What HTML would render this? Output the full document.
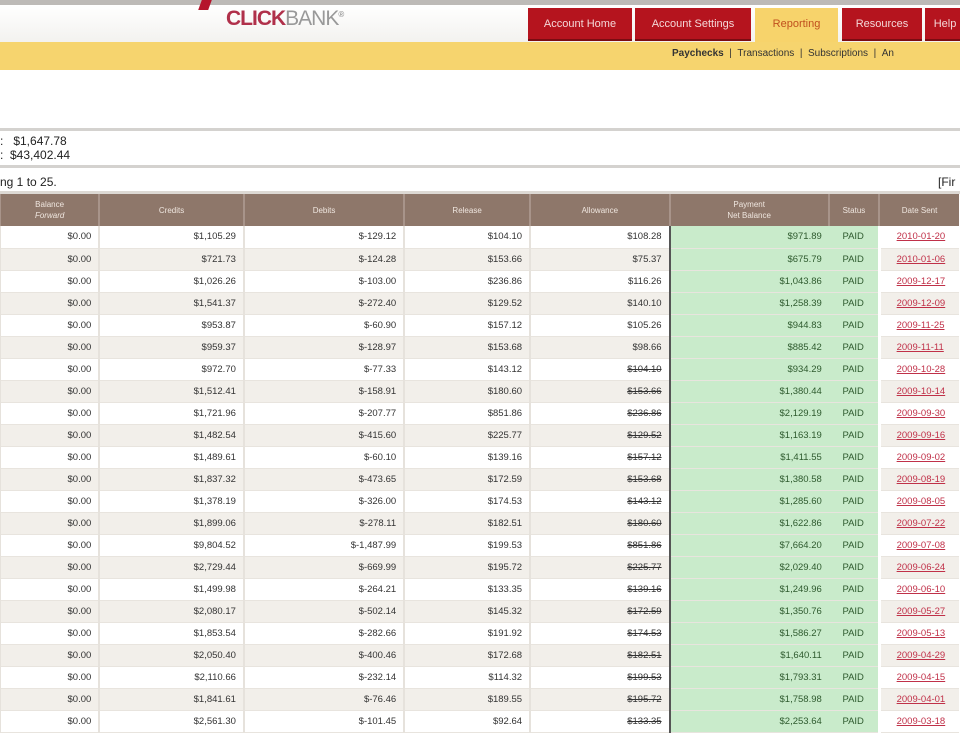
<!DOCTYPE html>
<html><head><meta charset="utf-8"><style>
*{margin:0;padding:0;box-sizing:border-box}
body{width:960px;height:720px;overflow:hidden;background:#fff;font-family:"Liberation Sans",sans-serif;position:relative}
.a{position:absolute}
table{position:absolute;left:-1px;top:194px;border-collapse:collapse;table-layout:fixed;font-size:9.5px;color:#333}
td{height:22px;text-align:right;padding-right:7px;border-left:2px solid #e6e2dc;white-space:nowrap;border-bottom:1px solid #e8e4de}
tr.e td{background:#f2efea}
th{background:#8e776a;color:#efe6df;font-weight:normal;font-size:8px;height:32px;border-left:2px solid #a8948a;line-height:11px}
td.g{background:#c9ebcb!important;color:#2e5a2e}
td.s{text-align:center;padding:0;border-left:none;border-right:2px solid #444}
td.pg{border-left:2px solid #555}
td.d{text-align:left;padding-left:16px;color:#c03048;text-decoration:underline;border-left:3px solid #fff}
.tab{position:absolute;top:8px;height:33px;background:#b5141e;color:#f4d8d8;font-size:11px;line-height:33px;text-align:center;border-bottom:2px solid #7a0c12}
</style></head><body>
<div class="a" style="left:0;top:0;width:960px;height:5px;background:#bdbab7"></div>
<div class="a" style="left:0;top:5px;width:960px;height:37px;background:linear-gradient(#fff,#f3f2ef)"></div>
<div class="a" style="left:200px;top:0;width:10px;height:10px;background:#b5142c;transform:skewX(-20deg)"></div>
<div class="a" style="left:226px;top:7px;font-size:21px;font-weight:bold;color:#b0304a;letter-spacing:-1px">CLICK<span style="font-weight:normal;color:#999">BANK</span><sup style="font-size:8px;color:#999">®</sup></div>
<div class="tab" style="left:528px;width:104px">Account Home</div>
<div class="tab" style="left:635px;width:116px">Account Settings</div>
<div class="tab" style="left:755px;width:83px;background:#f7d36b;color:#c0501e;border-bottom:none;height:34px">Reporting</div>
<div class="tab" style="left:842px;width:80px">Resources</div>
<div class="tab" style="left:925px;width:40px">Help</div>
<div class="a" style="left:0;top:42px;width:960px;height:28px;background:#f6d46e"></div>
<div class="a" style="left:672px;top:48px;font-size:10px;color:#333;white-space:nowrap"><b>Paychecks</b> &nbsp;| &nbsp;Transactions &nbsp;| &nbsp;Subscriptions &nbsp;| &nbsp;An</div>
<div class="a" style="left:0;top:128px;width:960px;height:3px;background:#d4d2cf"></div>
<div class="a" style="left:0;top:134px;font-size:12px;color:#222;line-height:14px">:&nbsp;&nbsp; $1,647.78<br>:&nbsp; $43,402.44</div>
<div class="a" style="left:0;top:165px;width:960px;height:3px;background:#d4d2cf"></div>
<div class="a" style="left:0;top:175px;font-size:12px;color:#222">ng 1 to 25.</div>
<div class="a" style="left:938px;top:175px;font-size:12px;color:#222">[Fir</div>
<div class="a" style="left:0;top:191px;width:960px;height:3px;background:#ddd9d4"></div>
<table>
<colgroup><col style="width:101px"><col style="width:147px"><col style="width:163px"><col style="width:128px"><col style="width:142px"><col style="width:162px"><col style="width:51px"><col style="width:80px"></colgroup>
<tr><th>Balance<br><i>Forward</i></th><th>Credits</th><th>Debits</th><th>Release</th><th>Allowance</th><th>Payment<br>Net Balance</th><th>Status</th><th>Date Sent</th></tr>
<tr><td>$0.00</td><td>$1,105.29</td><td>$-129.12</td><td>$104.10</td><td>$108.28</td><td class="g pg">$971.89</td><td class="g s">PAID</td><td class="d">2010-01-20</td></tr>
<tr class="e"><td>$0.00</td><td>$721.73</td><td>$-124.28</td><td>$153.66</td><td>$75.37</td><td class="g pg">$675.79</td><td class="g s">PAID</td><td class="d">2010-01-06</td></tr>
<tr><td>$0.00</td><td>$1,026.26</td><td>$-103.00</td><td>$236.86</td><td>$116.26</td><td class="g pg">$1,043.86</td><td class="g s">PAID</td><td class="d">2009-12-17</td></tr>
<tr class="e"><td>$0.00</td><td>$1,541.37</td><td>$-272.40</td><td>$129.52</td><td>$140.10</td><td class="g pg">$1,258.39</td><td class="g s">PAID</td><td class="d">2009-12-09</td></tr>
<tr><td>$0.00</td><td>$953.87</td><td>$-60.90</td><td>$157.12</td><td>$105.26</td><td class="g pg">$944.83</td><td class="g s">PAID</td><td class="d">2009-11-25</td></tr>
<tr class="e"><td>$0.00</td><td>$959.37</td><td>$-128.97</td><td>$153.68</td><td>$98.66</td><td class="g pg">$885.42</td><td class="g s">PAID</td><td class="d">2009-11-11</td></tr>
<tr><td>$0.00</td><td>$972.70</td><td>$-77.33</td><td>$143.12</td><td><s>$104.10</s></td><td class="g pg">$934.29</td><td class="g s">PAID</td><td class="d">2009-10-28</td></tr>
<tr class="e"><td>$0.00</td><td>$1,512.41</td><td>$-158.91</td><td>$180.60</td><td><s>$153.66</s></td><td class="g pg">$1,380.44</td><td class="g s">PAID</td><td class="d">2009-10-14</td></tr>
<tr><td>$0.00</td><td>$1,721.96</td><td>$-207.77</td><td>$851.86</td><td><s>$236.86</s></td><td class="g pg">$2,129.19</td><td class="g s">PAID</td><td class="d">2009-09-30</td></tr>
<tr class="e"><td>$0.00</td><td>$1,482.54</td><td>$-415.60</td><td>$225.77</td><td><s>$129.52</s></td><td class="g pg">$1,163.19</td><td class="g s">PAID</td><td class="d">2009-09-16</td></tr>
<tr><td>$0.00</td><td>$1,489.61</td><td>$-60.10</td><td>$139.16</td><td><s>$157.12</s></td><td class="g pg">$1,411.55</td><td class="g s">PAID</td><td class="d">2009-09-02</td></tr>
<tr class="e"><td>$0.00</td><td>$1,837.32</td><td>$-473.65</td><td>$172.59</td><td><s>$153.68</s></td><td class="g pg">$1,380.58</td><td class="g s">PAID</td><td class="d">2009-08-19</td></tr>
<tr><td>$0.00</td><td>$1,378.19</td><td>$-326.00</td><td>$174.53</td><td><s>$143.12</s></td><td class="g pg">$1,285.60</td><td class="g s">PAID</td><td class="d">2009-08-05</td></tr>
<tr class="e"><td>$0.00</td><td>$1,899.06</td><td>$-278.11</td><td>$182.51</td><td><s>$180.60</s></td><td class="g pg">$1,622.86</td><td class="g s">PAID</td><td class="d">2009-07-22</td></tr>
<tr><td>$0.00</td><td>$9,804.52</td><td>$-1,487.99</td><td>$199.53</td><td><s>$851.86</s></td><td class="g pg">$7,664.20</td><td class="g s">PAID</td><td class="d">2009-07-08</td></tr>
<tr class="e"><td>$0.00</td><td>$2,729.44</td><td>$-669.99</td><td>$195.72</td><td><s>$225.77</s></td><td class="g pg">$2,029.40</td><td class="g s">PAID</td><td class="d">2009-06-24</td></tr>
<tr><td>$0.00</td><td>$1,499.98</td><td>$-264.21</td><td>$133.35</td><td><s>$139.16</s></td><td class="g pg">$1,249.96</td><td class="g s">PAID</td><td class="d">2009-06-10</td></tr>
<tr class="e"><td>$0.00</td><td>$2,080.17</td><td>$-502.14</td><td>$145.32</td><td><s>$172.59</s></td><td class="g pg">$1,350.76</td><td class="g s">PAID</td><td class="d">2009-05-27</td></tr>
<tr><td>$0.00</td><td>$1,853.54</td><td>$-282.66</td><td>$191.92</td><td><s>$174.53</s></td><td class="g pg">$1,586.27</td><td class="g s">PAID</td><td class="d">2009-05-13</td></tr>
<tr class="e"><td>$0.00</td><td>$2,050.40</td><td>$-400.46</td><td>$172.68</td><td><s>$182.51</s></td><td class="g pg">$1,640.11</td><td class="g s">PAID</td><td class="d">2009-04-29</td></tr>
<tr><td>$0.00</td><td>$2,110.66</td><td>$-232.14</td><td>$114.32</td><td><s>$199.53</s></td><td class="g pg">$1,793.31</td><td class="g s">PAID</td><td class="d">2009-04-15</td></tr>
<tr class="e"><td>$0.00</td><td>$1,841.61</td><td>$-76.46</td><td>$189.55</td><td><s>$195.72</s></td><td class="g pg">$1,758.98</td><td class="g s">PAID</td><td class="d">2009-04-01</td></tr>
<tr><td>$0.00</td><td>$2,561.30</td><td>$-101.45</td><td>$92.64</td><td><s>$133.35</s></td><td class="g pg">$2,253.64</td><td class="g s">PAID</td><td class="d">2009-03-18</td></tr>
</table>
</body></html>
